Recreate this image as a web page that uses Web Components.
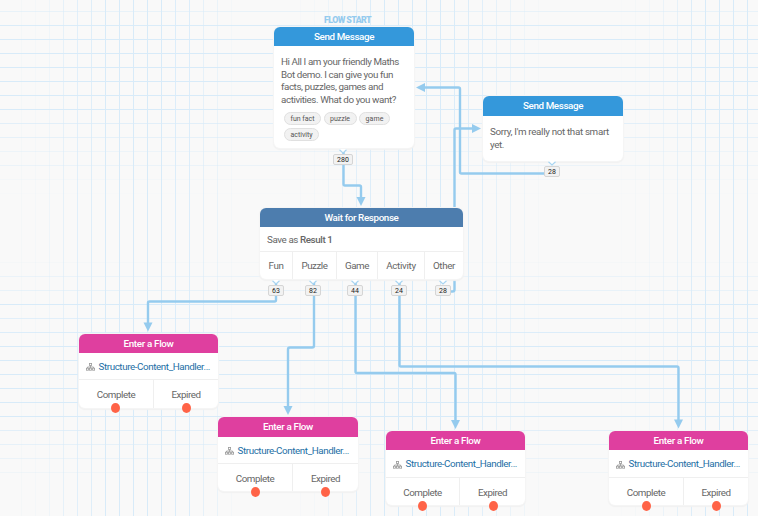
<!DOCTYPE html>
<html lang="en">
<head>
<meta charset="utf-8">
<title>Flow builder</title>
<style>
body{margin:0;background:#f9f9f9;font-family:Roboto,"Liberation Sans",sans-serif}
</style>
</head>
<body>
<flow-canvas>
  <flow-grid></flow-grid>
  <flow-links></flow-links>
  <flow-label x="324" y="14"><fit-text w="47">FLOW START</fit-text></flow-label>

  <flow-node x="274" y="27" w="140" h="121" color="#3498db" tw="60" heading="Send Message">
    <message-body>
      <fit-text w="118">Hi All I am your friendly Maths</fit-text>
      <fit-text w="112">Bot demo. I can give you fun</fit-text>
      <fit-text w="102">facts, puzzles, games and</fit-text>
      <fit-text w="115">activities. What do you want?</fit-text>
      <chip-list slot="chips">
        <reply-chip w="37"><fit-text w="24">fun fact</fit-text></reply-chip>
        <reply-chip w="33"><fit-text w="20">puzzle</fit-text></reply-chip>
        <reply-chip w="31"><fit-text w="18">game</fit-text></reply-chip>
        <reply-chip w="35"><fit-text w="22">activity</fit-text></reply-chip>
      </chip-list>
    </message-body>
  </flow-node>

  <flow-node x="483" y="96" w="140" h="65" head="20" color="#3498db" tw="60" heading="Send Message">
    <message-body>
      <fit-text w="119">Sorry, I'm really not that smart</fit-text>
      <fit-text w="14">yet.</fit-text>
    </message-body>
  </flow-node>

  <flow-node x="260" y="208" w="203" h="71" color="#4d7dae" tw="74" heading="Wait for Response">
    <save-row><fit-text w="31">Save as</fit-text><fit-text w="32.5" style="font-weight:500">Result 1</fit-text></save-row>
    <exit-row cols="32px 44px 41px 47px 1fr">
      <fit-text w="15">Fun</fit-text><fit-text w="26">Puzzle</fit-text><fit-text w="24">Game</fit-text><fit-text w="29.5">Activity</fit-text><fit-text w="22">Other</fit-text>
    </exit-row>
  </flow-node>

  <flow-node x="79" y="334" w="139" h="74" color="#df3f9f" tw="50" heading="Enter a Flow">
    <flow-ref></flow-ref>
    <exit-row drop="3" cols="74px 1fr"><fit-text w="38.5">Complete</fit-text><fit-text w="29">Expired</fit-text></exit-row>
  </flow-node>
  <flow-node x="218" y="417" w="140" h="74" head="20" color="#df3f9f" tw="50" heading="Enter a Flow">
    <flow-ref></flow-ref>
    <exit-row drop="3.5" cols="74px 1fr"><fit-text w="38.5">Complete</fit-text><fit-text w="29">Expired</fit-text></exit-row>
  </flow-node>
  <flow-node x="386" y="431" w="139" h="74" color="#df3f9f" tw="50" heading="Enter a Flow">
    <flow-ref h="27"></flow-ref>
    <exit-row drop="4" cols="73px 1fr"><fit-text w="38.5">Complete</fit-text><fit-text w="29">Expired</fit-text></exit-row>
  </flow-node>
  <flow-node x="609" y="431" w="139" h="74" color="#df3f9f" tw="50" heading="Enter a Flow">
    <flow-ref h="27"></flow-ref>
    <exit-row drop="4" cols="74px 1fr"><fit-text w="38.5">Complete</fit-text><fit-text w="29">Expired</fit-text></exit-row>
  </flow-node>

  <open-exit x="115.5" y="408"></open-exit><open-exit x="186" y="408"></open-exit>
  <open-exit x="255" y="491.5"></open-exit><open-exit x="325.5" y="491.5"></open-exit>
  <open-exit x="422.5" y="505.5"></open-exit><open-exit x="493" y="505.5"></open-exit>
  <open-exit x="646" y="505.5"></open-exit><open-exit x="716" y="505.5"></open-exit>

  <count-badge x="333" y="154" w="20"><fit-text w="12">280</fit-text></count-badge>
  <count-badge x="544" y="166" w="16"><fit-text w="8">28</fit-text></count-badge>
  <count-badge x="268" y="285" w="16"><fit-text w="8">63</fit-text></count-badge>
  <count-badge x="305" y="285" w="16"><fit-text w="8">82</fit-text></count-badge>
  <count-badge x="347" y="285" w="16"><fit-text w="8">44</fit-text></count-badge>
  <count-badge x="391" y="285" w="16"><fit-text w="8">24</fit-text></count-badge>
  <count-badge x="435" y="285" w="16"><fit-text w="8">28</fit-text></count-badge>
</flow-canvas>

<script>
const define = (name, render, after) => customElements.define(name, class extends HTMLElement {
  connectedCallback() {
    if (this.shadowRoot) return;
    this.attachShadow({ mode: 'open' }).innerHTML = render(k => this.getAttribute(k));
    if (after) after(this);
  }
});

define('flow-canvas', () => `<style>:host{display:block;position:relative;width:758px;height:516px;overflow:hidden;background:#f9f9f9}</style><slot></slot>`);

define('flow-grid', () => {
  const run = (start, levels) => levels.map((v, i) => [start + i * 14, v]);
  const xs = [
    ...run(21, [.12, .15, .3, .6, .75, .8, 1, 1, 1, 1, 1, .9, .9, .6, .45, .15]),
    ...run(300, [.08, .15, .35, .5, .7, .85, 1, 1, 1, 1, 1, .95, .85, .75, .6, .45, .3, .1]),
    ...run(621, [.05, .12, .2, .4, .6, .85, 1, 1, 1, 1])
  ];
  const ys = [
    ...run(11, [.5, .95, 1, 1, 1, 1, 1, 1, .7, .6, .35, .4, .15, .06]),
    ...run(262, [.1, .4, .5, 1, .75, .9, 1, 1, 1, 1, 1, 1, .7, .6, .4, .25])
  ];
  return `<style>:host{position:absolute;inset:0}svg{display:block}</style><svg width="758" height="516" fill="#d8ebf9">` +
    ys.map(([y, o]) => `<rect x="0" y="${y}" width="758" height="1" opacity="${o}"/>`).join('') +
    xs.map(([x, o]) => `<rect x="${x}" y="0" width="1" height="516" opacity="${o}"/>`).join('') + `</svg>`;
});

define('flow-links', () => {
  const paths = [
    'M343.5 150V184Q343.5 185.5 345 185.5H359.5Q361 185.5 361 187V199',
    'M552 173.5H461.5Q460 173.5 460 172V89Q460 87.5 458.5 87.5H424',
    'M443 291.5H452.5Q454.5 291.5 454.5 289.5V130Q454.5 128.5 456 128.5H473',
    'M276 282V300Q276 301.5 274.5 301.5H149.5Q148 301.5 148 303V324',
    'M314 282V345.5Q314 347.5 312 347.5H290Q288 347.5 288 349.5V408',
    'M355.5 282V371.5Q355.5 373 357 373H454Q455.5 373 455.5 374.5V421',
    'M399.5 282V365Q399.5 366.5 401 366.5H677Q678.5 366.5 678.5 368V421'
  ];
  const down = [[361, 206], [148, 331.5], [288, 415], [455.5, 429], [678.5, 428.5]];
  return `<style>:host{position:absolute;inset:0}svg{display:block}</style><svg width="758" height="516">
  <g fill="none" stroke="#95cbee" stroke-width="2.4">${paths.map(d => `<path d="${d}"/>`).join('')}</g>
  <g fill="#95cbee">${down.map(([x, y]) => `<path d="M${x - 4.5} ${y - 9}H${x + 4.5}L${x} ${y}Z"/>`).join('')}
  <path d="M425 83V92L416 87.5Z"/><path d="M472 124V133L481 128.5Z"/></g></svg>`;
});

define('flow-label', a => `<style>:host{position:absolute;left:${a('x')}px;top:${a('y')}px;font-size:8.8px;font-weight:900;line-height:12px;color:#95cbee}</style><slot></slot>`);

define('flow-node', a => `<style>
:host{position:absolute;left:${a('x')}px;top:${a('y')}px;width:${a('w')}px;height:${a('h')}px;display:flex;flex-direction:column;background:#fff;border-radius:6px;box-shadow:0 0 0 1px #f5f5f5,0 1px 1px 1px #f1f1f1;font-size:9.8px;line-height:12.6px;color:#666}
header{box-sizing:border-box;padding-top:1px;flex:none;height:${a('head') || 19}px;display:flex;align-items:center;justify-content:center;background:${a('color')};color:#fff;font-weight:500;border-radius:6px 6px 0 0}
</style><header><fit-text w="${a('tw')}">${a('heading')}</fit-text></header><slot></slot>`);

define('message-body', () => `<style>:host{display:flex;flex-direction:column;padding:10px 7px 0}::slotted(chip-list){margin-top:5.5px}</style><slot></slot><slot name="chips"></slot>`);
define('chip-list', () => `<style>:host{display:flex;flex-wrap:wrap;gap:3px 2.5px;padding-left:3px}</style><slot></slot>`);
define('reply-chip', a => `<style>:host{box-sizing:border-box;width:${a('w')}px;height:13px;display:flex;align-items:center;justify-content:center;border:1px solid #e0e0e0;border-radius:6.5px;background:#f2f2f2;color:#555;font-size:7px;line-height:9px;padding-top:2px}</style><slot></slot>`);
define('save-row', () => `<style>:host{display:flex;gap:2px;align-items:center;height:24px;padding:3px 7px 0;box-sizing:border-box}</style><slot></slot>`);
define('exit-row', a => `<style>
:host{flex:1;display:grid;grid-template-columns:${a('cols')};border-top:1px solid #efefef}
::slotted(*){display:flex!important;align-items:center;justify-content:center;padding-top:${a('drop') || 1.5}px;border-left:1px solid #efefef}
::slotted(:first-child){border-left:0}
</style><slot></slot>`);

define('flow-ref', a => `<style>
:host{box-sizing:border-box;height:${a('h') || 26}px;display:flex;align-items:center;gap:3.5px;padding:2px 7px 0;color:#1d6fa5}
svg{flex:none}
</style><svg width="9" height="8" viewBox="0 0 9 8" fill="none" stroke="#999" stroke-width=".8"><rect x="3.4" y=".5" width="2.2" height="2"/><path d="M4.5 2.5V5M1.5 5V4H7.5V5"/><rect x=".4" y="5.2" width="2" height="2"/><rect x="3.5" y="5.2" width="2" height="2"/><rect x="6.6" y="5.2" width="2" height="2"/></svg><fit-text w="111.5">Structure-Content_Handler...</fit-text>`);

define('open-exit', a => `<style>:host{position:absolute;left:${a('x') - 4.5}px;top:${a('y') - 5}px;width:9px;height:10px;border-radius:50%;background:#ff6347}</style>`);

define('count-badge', a => `<style>
:host{position:absolute;left:${a('x')}px;top:${a('y')}px;box-sizing:border-box;width:${a('w')}px;height:11px;display:flex;align-items:center;justify-content:center;border:1px solid #d5d5d5;border-radius:2px;background:#f2f2f2;color:#222;font-size:7px;line-height:9px;padding-top:1px}
svg{position:absolute;left:50%;top:-6px;margin-left:-4px}
</style><svg width="8" height="5"><path d="M0 0H8L4 4Z" fill="#fff"/><path d="M.5 .8L4 4L7.5 .8" fill="none" stroke="#a9d5f1" stroke-width="1.2"/></svg><slot></slot>`);

/* A single line of text tracked to occupy a given width. */
define('fit-text', () => `<style>:host{display:block;white-space:nowrap}span{display:inline-block}</style><span><slot></slot></span>`, el => {
  const span = el.shadowRoot.querySelector('span');
  requestAnimationFrame(() => {
    const width = span.getBoundingClientRect().width;
    span.style.letterSpacing = (el.getAttribute('w') - width) / el.textContent.length + 'px';
  });
});
</script>
</body>
</html>
